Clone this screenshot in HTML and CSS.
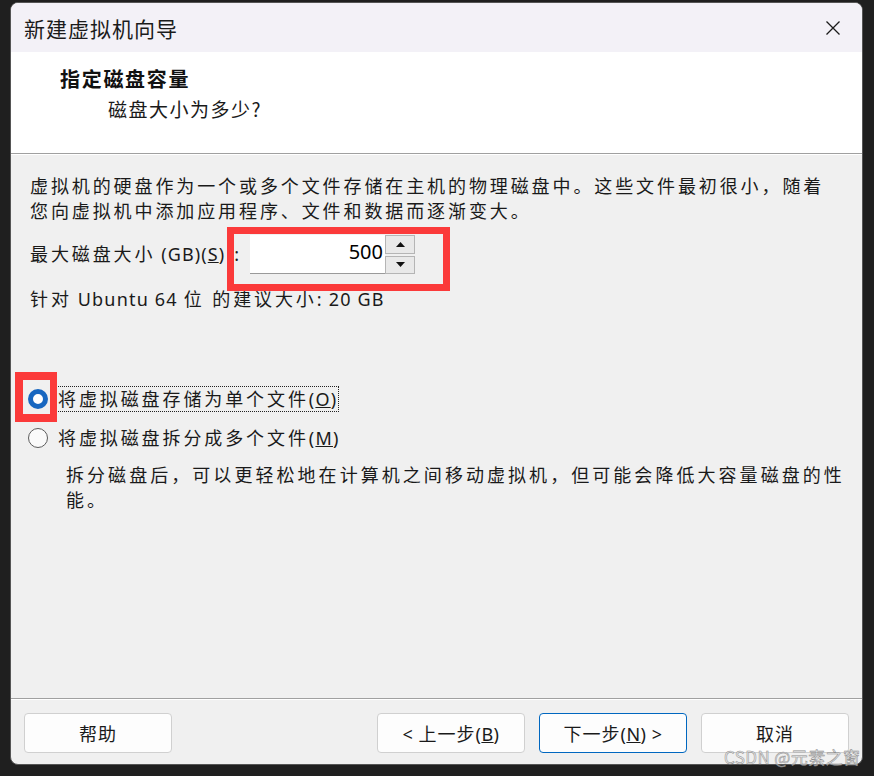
FILE: index.html
```html
<!DOCTYPE html>
<html lang="zh-CN">
<head>
<meta charset="utf-8">
<title>新建虚拟机向导</title>
<link rel="stylesheet" href="styles.css">
</head>
<body>
<div class="window">
  <div class="titlebar">
    <span class="title">新建虚拟机向导</span>
    <svg class="close" width="16" height="16" viewBox="0 0 16 16"><path d="M1.5 1.5 L14.5 14.5 M14.5 1.5 L1.5 14.5" stroke="#1b1b1b" stroke-width="1.3" fill="none"/></svg>
  </div>
  <div class="header">
    <div class="h-title">指定磁盘容量</div>
    <div class="h-sub">磁盘大小为多少<span class="en">?</span></div>
  </div>
  <div class="content">
    <p class="desc">虚拟机的硬盘作为一个或多个文件存储在主机的物理磁盘中。这些文件最初很小，随着<br>您向虚拟机中添加应用程序、文件和数据而逐渐变大。</p>
    <div class="size-row">
      <span class="size-label">最大磁盘大小<span class="en wide"> (GB)(<u>S</u>)</span><span class="colon">:</span></span>
      <div class="spin">
        <div class="spin-input">500</div>
        <div class="spin-btns">
          <div class="spin-btn"><svg width="9" height="5" viewBox="0 0 9 5"><path d="M0 5 L4.5 0 L9 5 Z" fill="#111"/></svg></div>
          <div class="spin-btn"><svg width="9" height="5" viewBox="0 0 9 5"><path d="M0 0 L4.5 5 L9 0 Z" fill="#111"/></svg></div>
        </div>
        <div class="mark mark-spin"></div>
      </div>
    </div>
    <p class="rec">针对<span class="en"> Ubuntu 64 </span>位 的建议大小<span class="en">: 20 GB</span></p>
    <div class="radio-row first">
      <span class="radio checked"></span>
      <span class="radio-label focus">将虚拟磁盘存储为单个文件<span class="en">(<u>O</u>)</span></span>
      <div class="mark mark-radio"></div>
    </div>
    <div class="radio-row">
      <span class="radio"></span>
      <span class="radio-label">将虚拟磁盘拆分成多个文件<span class="en">(<u>M</u>)</span></span>
    </div>
    <p class="note">拆分磁盘后，可以更轻松地在计算机之间移动虚拟机，但可能会降低大容量磁盘的性<br>能。</p>
  </div>
  <div class="footer">
    <button class="btn help">帮助</button>
    <button class="btn back"><span class="en">&lt; </span>上一步<span class="en">(<u>B</u>)</span></button>
    <button class="btn next">下一步<span class="en">(<u>N</u>) &gt;</span></button>
    <button class="btn">取消</button>
  </div>
</div>
<div class="watermark">CSDN @元素之窗</div>
</body>
</html>
```
FILE: styles.css
```css
* { box-sizing: border-box; }
html, body {
  margin: 0;
  padding: 0;
  background: #1f1f1f;
}
body {
  position: relative;
  width: 874px;
  height: 776px;
  overflow: hidden;
  font-family: "Noto Sans", "Noto Sans CJK SC", sans-serif;
  color: #1a1a1a;
}
.window {
  position: relative;
  margin: 2px 0 0 10px;
  width: 853px;
  height: 763px;
  border: 1px solid #555;
  border-radius: 8px;
  overflow: hidden;
  background: #f0f0f0;
  display: flex;
  flex-direction: column;
}
.titlebar {
  height: 49px;
  flex: none;
  background: #f3f1f7;
  display: flex;
  align-items: center;
  justify-content: space-between;
  padding: 0 21px 0 13px;
}
.title {
  font-size: 21px;
  letter-spacing: 1px;
  color: #1b1b1b;
  font-family: "Noto Sans CJK SC", sans-serif;
}
.close { display: block; margin-top: 1px; }
.header {
  flex: none;
  height: 102px;
  background: #fff;
  border-bottom: 1px solid #a0a0a0;
  box-shadow: 0 1px 0 #fff;
  padding: 13px 0 0 49px;
  font-family: "Noto Sans CJK SC", sans-serif;
}
.h-title {
  font-size: 20px;
  font-weight: bold;
  letter-spacing: 1.7px;
  line-height: 28px;
  color: #111;
}
.h-sub {
  margin: 2px 0 0 48px;
  font-size: 19px;
  letter-spacing: 1.5px;
  line-height: 28px;
  color: #1a1a1a;
}
.en { letter-spacing: 1.2px; }
.en.wide { letter-spacing: 1.1px; }
.content {
  flex: 1;
  padding: 20px 0 0 19px;
  font-size: 18px;
  letter-spacing: 2.9px;
  line-height: 25px;
}
.content p { margin: 0; white-space: nowrap; }
.size-row {
  margin-top: 10px;
  display: flex;
  align-items: center;
  height: 40px;
}
.size-label { width: 220px; white-space: nowrap; }
.colon { margin-left: 9px; letter-spacing: 0; }
.spin {
  position: relative;
  display: flex;
  height: 40px;
  padding-top: 1px;
}
.spin-input {
  width: 135px;
  height: 39px;
  background: #fff;
  border-bottom: 1px solid #9a9a9a;
  text-align: right;
  padding-right: 2px;
  font-size: 20px;
  letter-spacing: 0;
  line-height: 34px;
  color: #000;
}
.spin-btns {
  display: flex;
  flex-direction: column;
  gap: 2px;
  width: 30px;
  height: 39px;
}
.spin-btn {
  flex: 1;
  background: #e9e9e9;
  border: 1px solid #b5b5b5;
  display: flex;
  align-items: center;
  justify-content: center;
}
.spin-btn svg { display: block; }
.mark {
  position: absolute;
  border: 7px solid #fb3a3a;
  pointer-events: none;
}
.mark-spin {
  left: -23px;
  top: -7px;
  width: 223px;
  height: 64px;
}
.content .rec { margin-top: 13px; }
.radio-row {
  position: relative;
  display: flex;
  align-items: center;
  height: 26px;
  margin-top: 13px;
  margin-left: -2px;
}
.radio-row.first { margin-top: 74px; }
.radio {
  width: 20px;
  height: 20px;
  border-radius: 50%;
  border: 1px solid #5c5c5c;
  background: #fafafa;
  margin-right: 8px;
  flex: none;
}
.radio.checked {
  border: 5px solid #1867c0;
  background: #fff;
}
.radio-label {
  padding: 0 1px;
  height: 26px;
  line-height: 24px;
  border: 1px solid transparent;
}
.radio-label.focus { border: 1px dotted #222; }
.mark-radio {
  left: -13px;
  top: -14px;
  width: 42px;
  height: 50px;
  border-width: 8px 7px 8px 8px;
}
.content .note {
  margin: 12px 0 0 36px;
  letter-spacing: 3.05px;
}
.footer {
  flex: none;
  height: 66px;
  border-top: 1px solid #a0a0a0;
  box-shadow: inset 0 1px 0 #fff;
  display: flex;
  align-items: flex-start;
  padding: 14px 13px 0 13px;
  gap: 14px;
}
.btn {
  width: 148px;
  height: 40px;
  background: #fdfdfd;
  border: 1px solid #d0d0d0;
  border-radius: 4px;
  font-family: "Noto Sans CJK SC", sans-serif;
  font-size: 18px;
  color: #1a1a1a;
  padding: 0;
  letter-spacing: 1px;
}
.btn .en { letter-spacing: 0.5px; font-family: "Noto Sans", sans-serif; }
.btn.help { margin-right: auto; }
.btn.next { border-color: #0067c0; }
.watermark {
  position: absolute;
  left: 724px;
  top: 747px;
  font-family: "Noto Sans CJK SC", sans-serif;
  font-size: 17px;
  line-height: 20px;
  color: rgba(230,230,230,0.6);
  -webkit-text-stroke: 0.5px #8c8c8c;
  letter-spacing: 0.4px;
}
```
